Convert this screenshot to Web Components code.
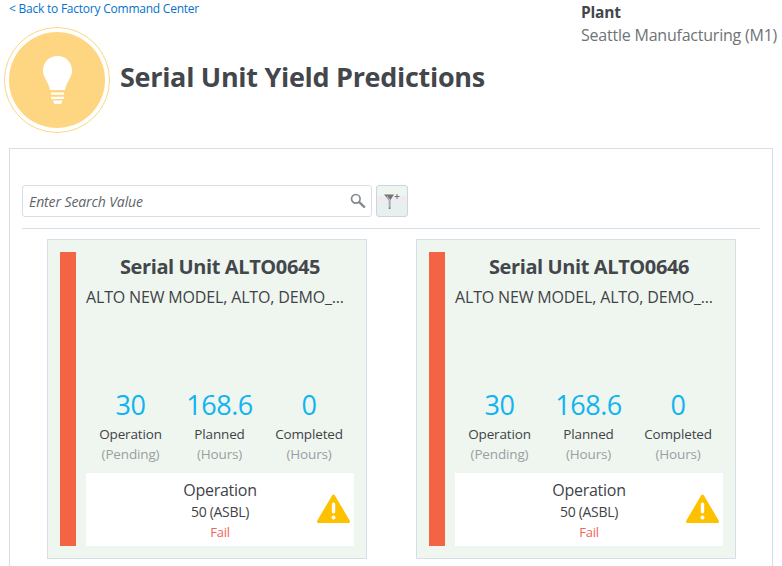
<!DOCTYPE html>
<html><head><meta charset="utf-8">
<style>
html,body{margin:0;padding:0;background:#fff;height:566px;overflow:hidden}
body{font-family:"Open Sans","Noto Sans",sans-serif;color:#3f4347}
</style></head><body>
<template id="t-page">
<style>
:host{display:block;width:782px;height:566px;overflow:hidden;box-sizing:border-box}
.top{display:flex;height:148px;box-sizing:border-box}
.left{flex:1;min-width:0}
a{display:block;color:#0572ce;font-size:12px;letter-spacing:-.23px;line-height:16px;padding:1px 0 0 9px;height:17px;text-decoration:none}
.head{display:flex;align-items:center;gap:10px;padding:9px 0 0 4px}
h1{margin:0;font-size:27px;font-weight:700;color:#43474b;letter-spacing:-.3px;line-height:36px;position:relative;top:-3px;white-space:nowrap}
.plant{width:201px;flex:none;font-size:16px;letter-spacing:-.22px;line-height:23px;padding-top:1px;white-space:nowrap}
.plant b{display:block;font-weight:700;color:#43474b;font-size:15.500px}
.plant span{display:block;color:#6f7377}
.panel{margin:0 9px;border:1px solid #d6dfe6;border-bottom:none;height:418px;padding:36px 12px 0;box-sizing:border-box;width:764px}
.tools{display:flex;gap:4px;height:43px;border-bottom:1px solid #d6dfe6;box-sizing:content-box}
.search{width:350px;height:32px;box-sizing:border-box;border:1px solid #d6dfe6;border-radius:3px;display:flex;align-items:center;justify-content:space-between;padding:0 3px 0 6px;font-style:italic;font-size:14px;letter-spacing:-.1px;color:#5f6468}
.fbtn{width:32px;height:32px;box-sizing:border-box;border:1px solid #c9d6df;border-radius:3px;background:linear-gradient(#eef5ee 0 33%,#efe9f0 33% 55%,#e7efef 55%);display:flex;align-items:center;justify-content:center}
.cards{display:flex;gap:49px;padding:10px 0 0 25px}
</style>
<div class="top"><div class="left">
<a href="#">&lt; Back to Factory Command Center</a>
<div class="head">
<svg width="106" height="106" viewBox="0 0 106 106"><circle cx="53" cy="53" r="52.500" fill="#fff" stroke="#fdd785" stroke-width="1"/><circle cx="53" cy="53" r="48" fill="#fed681"/>
<path d="M53.500 29C44.500 29 39 36 39 43.500c0 7 5.500 11 7 19.500h15c1.500-8.500 7-12.500 7-19.500C68 36 62.500 29 53.500 29z" fill="#fff"/>
<rect x="47" y="65.500" width="13" height="2.200" fill="#fff"/><rect x="47" y="69.800" width="13" height="2.200" fill="#fff"/><path d="M49 73.500h9.500l-1.500 3.500h-6.500z" fill="#fff"/></svg>
<h1>Serial Unit Yield Predictions</h1>
</div></div>
<div class="plant"><b>Plant</b><span>Seattle Manufacturing (M1)</span></div></div>
<div class="panel">
<div class="tools">
<div class="search"><span>Enter Search Value</span>
<svg width="18" height="18" viewBox="0 0 18 18" style="margin-right:1px"><circle cx="6.800" cy="6.800" r="4.300" fill="none" stroke="#85898d" stroke-width="1.700"/><path d="M10.200 10.200l5 4.600" stroke="#85898d" stroke-width="2.400" stroke-linecap="round"/></svg></div>
<div class="fbtn"><svg width="18" height="18" viewBox="0 0 18 18"><path d="M1 2.500h10L7.400 8v9H5.800V8z" fill="#6d7478"/><path d="M4 4l2.800 4v7.500" fill="none" stroke="#e8eeee" stroke-width=".7"/><path d="M14 2v5M11.500 4.500h5" stroke="#6d7478" stroke-width="1"/></svg></div>
</div>
<div class="cards"><s-card unit="ALTO0645"></s-card><s-card unit="ALTO0646"></s-card></div>
</div>
</template>
<template id="t-card">
<style>
:host{display:flex;width:320px;height:320px;box-sizing:border-box;border:1px solid #d6dfe6;background:#eff6ef;padding:12px;gap:10px}
.bar{width:16px;background:#f26444;flex:none}
.main{flex:1;min-width:0;display:flex;flex-direction:column}
h2{margin:0;text-align:center;font-size:20px;font-weight:700;color:#43474b;letter-spacing:-.4px;line-height:26px;padding-top:2px;height:28px}
.desc{font-size:16px;letter-spacing:-.16px;line-height:22px;height:22px;padding-top:4px;margin-bottom:auto;white-space:nowrap}
.stats{display:grid;grid-template-columns:89px 89px 90px;text-align:center;height:86px}
.n{font-size:27px;line-height:36px;color:#0fb4f0;letter-spacing:-.5px;height:37px}
.l,.u{font-size:13.500px;letter-spacing:-.15px;line-height:20px}
.u{color:#9a9ea3}
.op{height:73px;background:#fff;position:relative;text-align:center;display:flex;flex-direction:column;padding-top:7px;box-sizing:border-box}
.op div:nth-child(1){font-size:16px;letter-spacing:-.27px;line-height:21px}
.op div:nth-child(2){font-size:14px;letter-spacing:-.3px;line-height:21px}
.op div:nth-child(3){font-size:13px;letter-spacing:-.3px;line-height:20px;color:#f26457}
svg{position:absolute;right:4px;top:21px}
</style>
<div class="bar"></div>
<div class="main">
<h2>Serial Unit <span id="u"></span></h2>
<div class="desc">ALTO NEW MODEL, ALTO, DEMO_...</div>
<div class="stats">
<div><div class="n">30</div><div class="l">Operation</div><div class="u">(Pending)</div></div>
<div><div class="n">168.6</div><div class="l">Planned</div><div class="u">(Hours)</div></div>
<div><div class="n">0</div><div class="l">Completed</div><div class="u">(Hours)</div></div>
</div>
<div class="op"><div>Operation</div><div>50 (ASBL)</div><div>Fail</div>
<svg width="33" height="30" viewBox="0 0 33 30"><path d="M16.500 2L31.500 27.500H1.500z" fill="#fdc100" stroke="#fdc100" stroke-width="3" stroke-linejoin="round"/><rect x="14.800" y="8.500" width="3.400" height="11" rx="1.700" fill="#fff"/><circle cx="16.500" cy="23.500" r="2" fill="#fff"/></svg>
</div></div>
</template>
<s-page></s-page>
<script>
function def(name,tid,init){customElements.define(name,class extends HTMLElement{constructor(){super();this.attachShadow({mode:'open'}).appendChild(document.getElementById(tid).content.cloneNode(true));}connectedCallback(){init&&init(this)}})}
def('s-card','t-card',e=>{e.shadowRoot.getElementById('u').textContent=e.getAttribute('unit')});
def('s-page','t-page');
</script>
</body></html>
